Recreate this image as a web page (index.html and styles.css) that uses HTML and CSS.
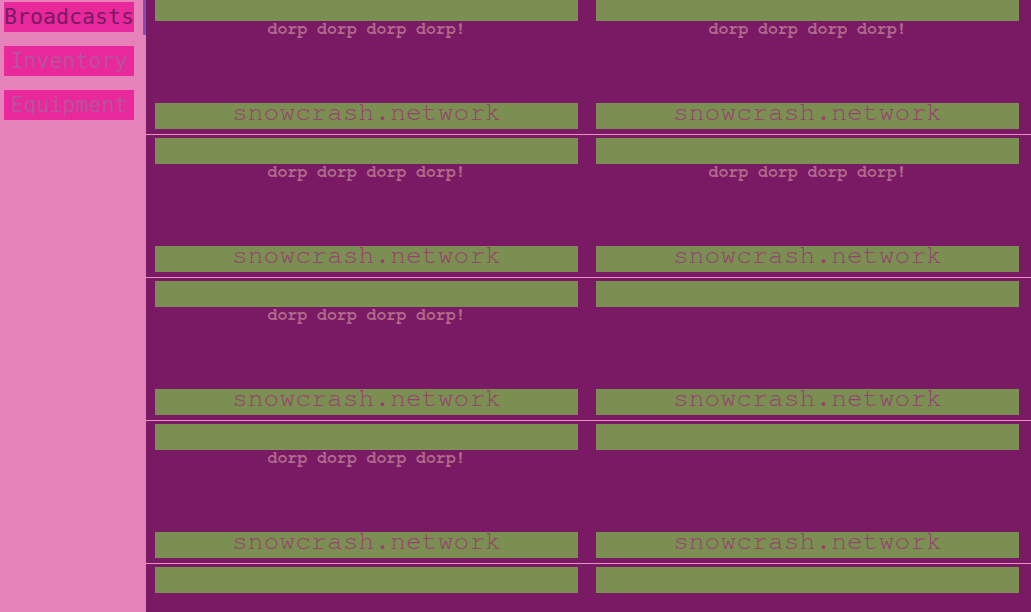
FILE: index.html
```html
<!DOCTYPE html>
<html>
<head>
<meta charset="utf-8">
<link rel="stylesheet" href="styles.css">
</head>
<body>
<div class="app">
  <nav class="sidebar">
    <div class="nav-item active">Broadcasts</div>
    <div class="nav-item">Inventory</div>
    <div class="nav-item">Equipment</div>
    <span class="indicator"></span>
  </nav>
  <main class="main">
    <div class="feed">
      <div class="row">
        <div class="card"><div class="bar"></div><div class="msg">dorp dorp dorp dorp!</div><div class="bar foot">snowcrash.network</div></div>
        <div class="card"><div class="bar"></div><div class="msg">dorp dorp dorp dorp!</div><div class="bar foot">snowcrash.network</div></div>
      </div>
      <div class="row">
        <div class="card"><div class="bar"></div><div class="msg">dorp dorp dorp dorp!</div><div class="bar foot">snowcrash.network</div></div>
        <div class="card"><div class="bar"></div><div class="msg">dorp dorp dorp dorp!</div><div class="bar foot">snowcrash.network</div></div>
      </div>
      <div class="row">
        <div class="card"><div class="bar"></div><div class="msg">dorp dorp dorp dorp!</div><div class="bar foot">snowcrash.network</div></div>
        <div class="card"><div class="bar"></div><div class="bar foot">snowcrash.network</div></div>
      </div>
      <div class="row">
        <div class="card"><div class="bar"></div><div class="msg">dorp dorp dorp dorp!</div><div class="bar foot">snowcrash.network</div></div>
        <div class="card"><div class="bar"></div><div class="bar foot">snowcrash.network</div></div>
      </div>
      <div class="row">
        <div class="card"><div class="bar"></div></div>
        <div class="card"><div class="bar"></div></div>
      </div>
    </div>
  </main>
</div>
</body>
</html>
```

FILE: styles.css
```css
html, body {
  margin: 0;
  padding: 0;
  height: 100%;
  overflow: hidden;
}
.app {
  display: flex;
  height: 612px;
  overflow: hidden;
}
.sidebar {
  position: relative;
  width: 146px;
  flex: none;
  background: #e582b9;
  box-sizing: border-box;
  padding: 2px 0 0 4px;
  display: flex;
  flex-direction: column;
  gap: 14px;
}
.nav-item {
  width: 130px;
  height: 30px;
  line-height: 30px;
  background: #e9289b;
  color: #b8529c;
  font-family: "DejaVu Sans Mono", monospace;
  font-size: 21.6px;
  text-align: center;
  white-space: nowrap;
}
.nav-item.active {
  color: #7a1a65;
}
.indicator {
  position: absolute;
  top: 0;
  right: 0;
  width: 3px;
  height: 35px;
  background: #7f4fb2;
}
.main {
  flex: 1;
  background: #7a1a65;
  overflow: hidden;
}
.feed {
  margin-top: -8px;
}
.row {
  display: grid;
  grid-template-columns: 1fr 1fr;
  column-gap: 18px;
  padding: 0 12px 0 9px;
  border-bottom: 1px solid #ea90c5;
}
.card {
  height: 142px;
  box-sizing: border-box;
  padding: 3px 0 5px;
  display: flex;
  flex-direction: column;
}
.bar {
  height: 26px;
  flex: none;
  background: #7b8f52;
}
.msg {
  font-family: "Nimbus Mono PS", "Nimbus Mono L", FreeMono, "Courier 10 Pitch", "Liberation Mono", monospace;
  font-weight: bold;
  font-size: 16.5px;
  line-height: 17px;
  color: #b06a8a;
  text-align: center;
}
.foot {
  margin-top: auto;
  font-family: "Nimbus Mono PS", "Nimbus Mono L", FreeMono, "Courier 10 Pitch", "Liberation Mono", monospace;
  font-size: 26.4px;
  line-height: 18px;
  color: #96426f;
  text-align: center;
  white-space: nowrap;
}
```
